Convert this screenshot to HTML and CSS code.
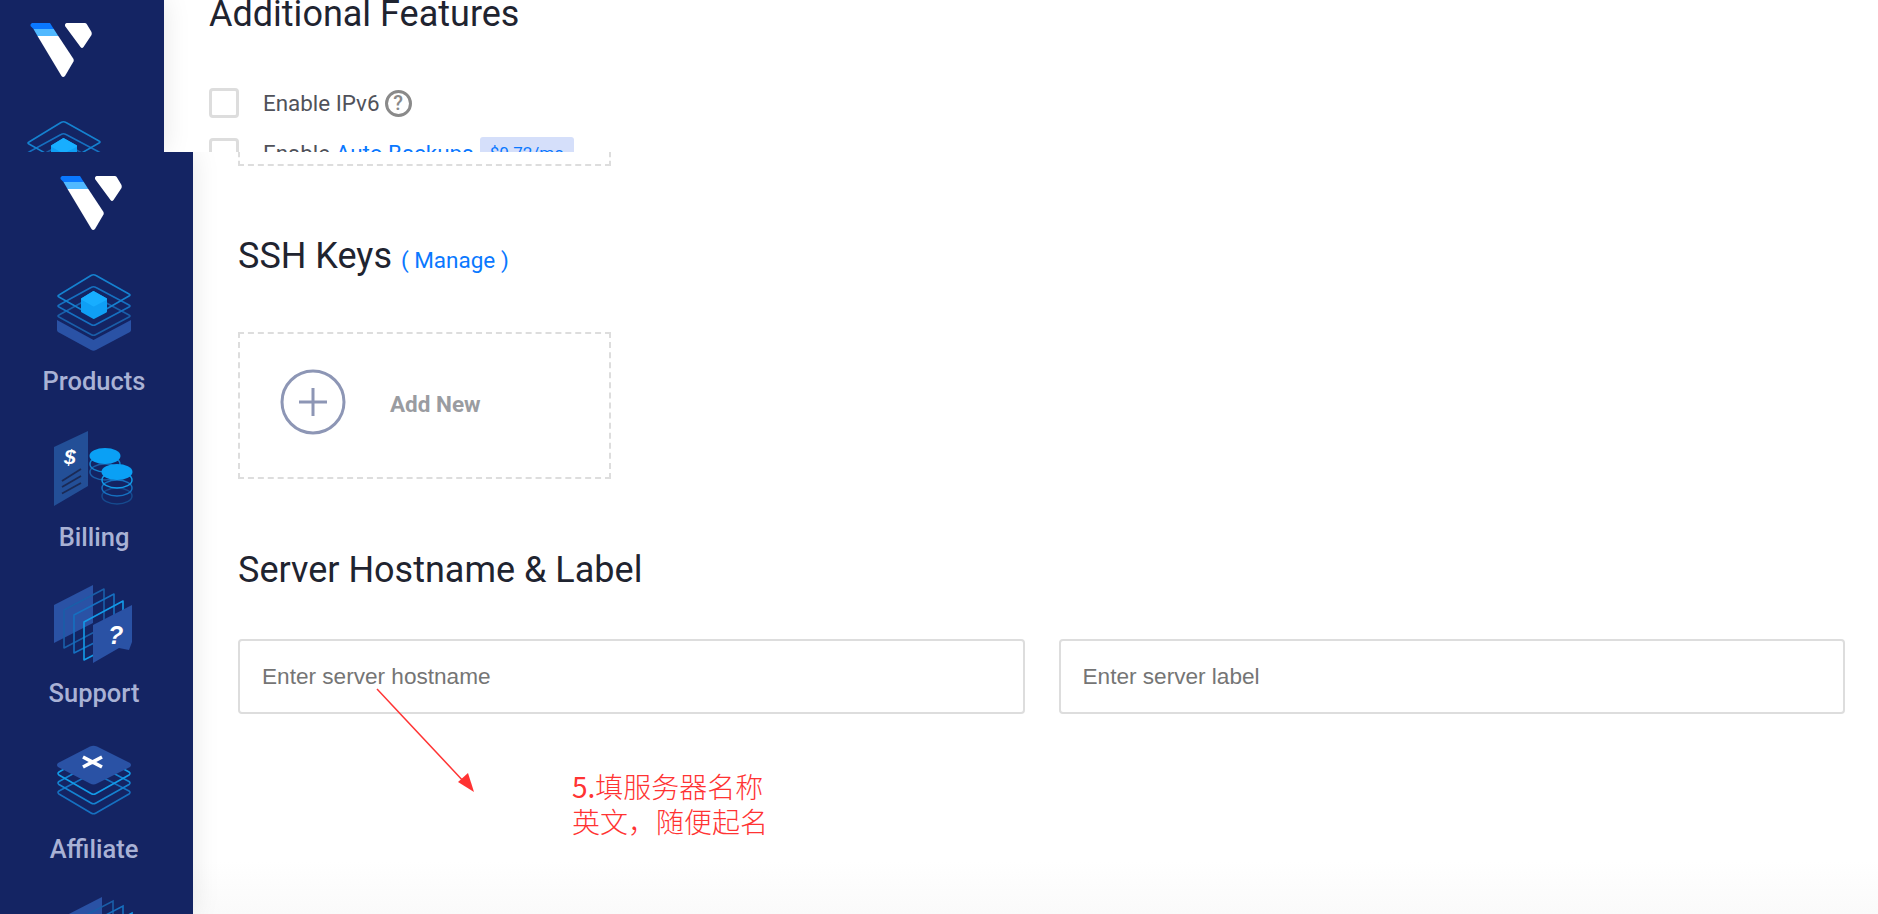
FILE: index.html
```html
<!DOCTYPE html>
<html>
<head>
	<title>Deploy server</title>
	<link rel="stylesheet" href="styles.css">
</head>
<body>
<svg class="defs" width="0" height="0">
  <symbol id="logo" viewBox="0 0 64 56">
    <path d="M3 1H21L24.8 7H4.5L1.5 4Q1 2 3 1Z" fill="#0a78ff"/>
    <path d="M4.5 7H24.8L29.3 14H8.5Z" fill="#51b9ff"/>
    <path d="M8.5 14H29.3L44.5 37Q45 38.5 44.5 39.5L36 54Q34 56 32.5 54Z" fill="#fff"/>
    <path d="M37.5 1H56Q57.5 1 58 2.5L62.5 10Q63 12 62.5 13L54.5 25Q53 27 51.5 25L36 4Q35.5 1.5 37.5 1Z" fill="#fff"/>
  </symbol>
  <symbol id="products" viewBox="0 0 76 80">
    <path d="M1 48L37.5 68L75 48V58Q75 59 74 60L40 78Q37.5 79.500 35 78L2 60Q1 59 1 58Z" fill="#2a52a5"/>
    <g fill="none" stroke-width="1.600">
      <path d="M3 43L35 25.500Q37.500 24 40 25.500L73 43Q75 44 73 45L40 62.500Q37.500 64 35 62.500L3 45Q1 44 3 43Z" stroke="#1a5ea8"/>
      <path d="M3 33L35 15.500Q37.500 14 40 15.500L73 33Q75 34 73 35L40 52.500Q37.500 54 35 52.500L3 35Q1 34 3 33Z" stroke="#1670c0"/>
      <path d="M3 23L35 3.500Q37.500 2 40 3.500L73 22Q75 23 73 24L40 43Q37.500 44.500 35 43L3 25Q1 24 3 23Z" stroke="#1582d0"/>
    </g>
    <path d="M26 27L37.500 20L50 27V39.500L37.500 46L26 39.500Z" fill="#0f9ff5" stroke="#0f9ff5" stroke-width="2" stroke-linejoin="round"/>
    <path d="M26 27L37.500 20L50 27L37.500 33.500Z" fill="#18aeff" stroke="#18aeff" stroke-width="2" stroke-linejoin="round"/>
  </symbol>
  <symbol id="billing" viewBox="0 0 82 78">
    <path d="M1 18L35 2V57L1 77Z" fill="#234f97"/>
    <text class="icon-mark" x="11" y="35" font-size="21">$</text>
    <g stroke="#1b2a55" stroke-width="1.800">
      <path d="M9 52L28 40"/>
      <path d="M9 58L28 47"/>
      <path d="M9 64.500L28 54"/>
    </g>
    <g fill="none" stroke-width="1.500">
      <ellipse cx="52" cy="43" rx="15" ry="8" stroke="#1a5ea8"/>
      <ellipse cx="52" cy="35" rx="15" ry="8" stroke="#1582d0"/>
      <ellipse cx="64" cy="67" rx="15" ry="8" stroke="#164a8e"/>
      <ellipse cx="64" cy="59" rx="15" ry="8" stroke="#1670c0"/>
      <ellipse cx="64" cy="51" rx="15" ry="8" stroke="#139be8"/>
    </g>
    <ellipse cx="52" cy="27" rx="15.500" ry="8" fill="#0aa0f5"/>
    <ellipse cx="64" cy="43" rx="15.500" ry="8" fill="#0aa0f5"/>
  </symbol>
  <symbol id="support" viewBox="0 0 82 80">
    <path d="M1 21L40 1V39L1 59Z" fill="#2a52a5"/>
    <g fill="none" stroke-width="1.600" stroke-linejoin="round">
      <path d="M11 26L51 5V43L11 64Z" stroke="#1a5ea8"/>
      <path d="M21 31L61 10V49L21 69Z" stroke="#1670c0"/>
      <path d="M31 38L70 17V56L31 76Z" stroke="#139be8"/>
    </g>
    <path d="M40 41L79 21V58L76 66L66 64L40 79Z" fill="#2a52a5"/>
    <text class="icon-mark" x="55" y="60" font-size="25">?</text>
  </symbol>
  <symbol id="affiliate" viewBox="-3 -4 82 80">
    <g fill="none" stroke-width="1.600">
      <path d="M3 47L35 30Q37.500 29 40 30L73 47Q75 48.500 73 50L40 69Q37.500 70.500 35 69L3 50Q1 48.500 3 47Z" stroke="#1670c0"/>
      <path d="M3 37.500L35 20Q37.500 19 40 20L73 37.500Q75 39 73 40.500L40 59Q37.500 60.500 35 59L3 40.500Q1 39 3 37.500Z" stroke="#1582d0"/>
      <path d="M3 28L35 10Q37.500 9 40 10L73 28Q75 29.500 73 31L40 49.500Q37.500 51 35 49.500L3 31Q1 29.500 3 28Z" stroke="#139be8"/>
    </g>
    <path d="M2 19L34 2.500Q37.500 1 41 2.500L74 19Q76 21 74 23L41 39.500Q37.500 41.500 34 39.500L2 23Q0 21 2 19Z" fill="#2a52a5"/>
    <path d="M27 13L46 23M46 13L27 23" stroke="#fff" stroke-width="3.600"/>
  </symbol>
  <symbol id="panes" viewBox="0 0 82 80">
    <path d="M1 21L40 1V39L1 59Z" fill="#2a52a5"/>
    <g fill="none" stroke-width="1.600">
      <path d="M11 26L51 5V43L11 64Z" stroke="#1a5ea8"/>
      <path d="M21 31L61 10V49L21 69Z" stroke="#1670c0"/>
      <path d="M31 38L70 17V56L31 76Z" stroke="#139be8"/>
    </g>
  </symbol>
</svg>

<div class="strip">
  <div class="sidebar sidebar-small">
    <svg class="logo"><use href="#logo"/></svg>
    <svg class="strip-icon"><use href="#products"/></svg>
  </div>
  <div class="main strip-main">
    <h2 class="heading strip-heading">Additional Features</h2>
    <div class="option">
      <span class="checkbox"></span>
      <span>Enable IPv6</span>
      <span class="help">?</span>
    </div>
    <div class="option">
      <span class="checkbox"></span>
      <span>Enable <a class="link">Auto Backups</a></span>
      <span class="price">$0.72/mo</span>
    </div>
  </div>
</div>

<div class="page">
  <div class="sidebar">
    <svg class="logo"><use href="#logo"/></svg>
    <div class="nav-item">
      <svg class="nav-icon"><use href="#products"/></svg>
      <span>Products</span>
    </div>
    <div class="nav-item">
      <svg class="nav-icon"><use href="#billing"/></svg>
      <span>Billing</span>
    </div>
    <div class="nav-item">
      <svg class="nav-icon"><use href="#support"/></svg>
      <span>Support</span>
    </div>
    <div class="nav-item">
      <svg class="nav-icon"><use href="#affiliate"/></svg>
      <span>Affiliate</span>
    </div>
    <div class="nav-item">
      <svg class="nav-icon nav-icon-last"><use href="#panes"/></svg>
    </div>
  </div>
  <div class="main">
    <div class="box-end"></div>

    <h2 class="heading ssh-heading">SSH Keys <a class="manage">( Manage )</a></h2>
    <div class="add-box">
      <svg class="add-icon" viewBox="0 0 66 66">
        <circle cx="33" cy="33" r="31" fill="none" stroke="#8d96b5" stroke-width="3"/>
        <path d="M33 19V47M19 33H47" stroke="#8d96b5" stroke-width="3"/>
      </svg>
      <span class="add-text">Add New</span>
    </div>

    <h2 class="heading host-heading">Server Hostname &amp; Label</h2>
    <div class="fields">
      <input class="field" type="text" placeholder="Enter server hostname">
      <input class="field" type="text" placeholder="Enter server label">
    </div>

    <svg class="arrow" viewBox="0 0 100 106">
      <path d="M1 1L90 96" stroke="#f33" stroke-width="1.500"/>
      <path d="M98 104L82 94L92 85Z" fill="#f33"/>
    </svg>
    <div class="note"><span class="note-num">5.</span>填服务器名称<br>英文，随便起名</div>
  </div>
</div>
</body>
</html>
```

FILE: styles.css
```css
html {
  box-sizing: border-box;
}
*,
*:before,
*:after {
  box-sizing: inherit;
}
body {
  margin: 0;
  height: 914px;
  overflow: hidden;
  background-color: #fff;
  font-family: Roboto, sans-serif;
  color: #1f2430;
}
.defs {
  display: block;
  height: 0;
}
.strip {
  display: flex;
  height: 152px;
  overflow: hidden;
}
.page {
  display: flex;
  height: 762px;
  overflow: hidden;
}
.sidebar {
  flex: none;
  width: 193px;
  height: 100%;
  display: flex;
  flex-direction: column;
  align-items: center;
  padding: 23px 5px 0 0;
  background-color: #142463;
  box-shadow: 0 0 26px rgba(0, 0, 0, 0.1);
  z-index: 1;
}
.sidebar-small {
  width: 164px;
  padding: 22px 36px 0 0;
}
.logo {
  flex: none;
  width: 64px;
  height: 56px;
  margin-right: 7px;
}
.strip-icon {
  flex: none;
  width: 76px;
  height: 80px;
  margin-top: 41px;
}
.nav-item {
  flex: none;
  display: flex;
  flex-direction: column;
  align-items: center;
  height: 156px;
  margin-top: 41px;
  margin-bottom: -41px;
  font-size: 25.500px;
  font-weight: 500;
  color: #a9b2d5;
}
.nav-item span {
  margin-top: 14px;
}
.nav-icon {
  width: 82px;
  height: 80px;
}
.nav-icon-last {
  margin-left: 18px;
}
.main {
  position: relative;
  flex: 1;
  padding: 0 33px 0 45px;
  background: linear-gradient(to bottom, #fff 93%, #fafafa 100%);
}
.strip-main {
  background: #fff;
}
.heading {
  margin: 0;
  font-size: 36px;
  font-weight: 400;
  line-height: 40px;
}
.strip-heading {
  margin-top: -6px;
  margin-bottom: 54px;
}
.option {
  display: flex;
  align-items: center;
  height: 30px;
  margin-bottom: 20px;
  font-size: 22.400px;
  color: #50525a;
}
.checkbox {
  flex: none;
  width: 30px;
  height: 30px;
  margin-right: 24px;
  border: 3px solid #ddd;
  border-radius: 4px;
}
.help {
  width: 27px;
  height: 27px;
  margin-left: 5px;
  border: 3px solid #8a8a8a;
  border-radius: 50%;
  font-size: 20px;
  font-weight: 500;
  line-height: 21px;
  text-align: center;
  color: #8a8a8a;
}
.link {
  color: #0a78ff;
}
.price {
  margin-left: 6px;
  padding: 6px 10px;
  border-radius: 3px;
  background-color: #d5dffa;
  font-size: 17px;
  line-height: 20px;
  color: #0a78ff;
}
.box-end {
  width: 373px;
  height: 14px;
  border: 2px dashed #ddd;
  border-top: none;
}
.ssh-heading {
  margin-top: 70px;
}
.manage {
  font-size: 22.500px;
  color: #0a78ff;
}
.add-box {
  display: flex;
  align-items: center;
  width: 373px;
  height: 147px;
  margin-top: 52px;
  padding: 0 0 7px 40px;
  border: 2px dashed #ddd;
}
.add-icon {
  width: 66px;
  height: 66px;
}
.add-text {
  margin-left: 44px;
  padding-top: 4px;
  font-size: 22.500px;
  font-weight: 700;
  color: #9a9ca1;
}
.host-heading {
  margin-top: 71px;
}
.fields {
  display: grid;
  grid-template-columns: 1fr 1fr;
  gap: 34px;
  margin-top: 49px;
}
.field {
  height: 75px;
  padding: 0 22px;
  border: 2px solid #ddd;
  border-radius: 4px;
  outline: none;
  background-color: #fff;
  font-family: "Liberation Sans", sans-serif;
  font-size: 22.600px;
}
.field::placeholder {
  color: #757575;
}
.arrow {
  position: absolute;
  left: 183px;
  top: 536px;
  width: 100px;
  height: 106px;
}
.note {
  position: absolute;
  left: 379px;
  top: 617px;
  font-family: "Noto Sans CJK SC", sans-serif;
  font-size: 28px;
  font-weight: 300;
  line-height: 35px;
  color: #f33;
}
.note-num {
  font-weight: 400;
}
.icon-mark {
  font-family: "Liberation Sans", sans-serif;
  font-style: italic;
  font-weight: 700;
  fill: #fff;
}
```
